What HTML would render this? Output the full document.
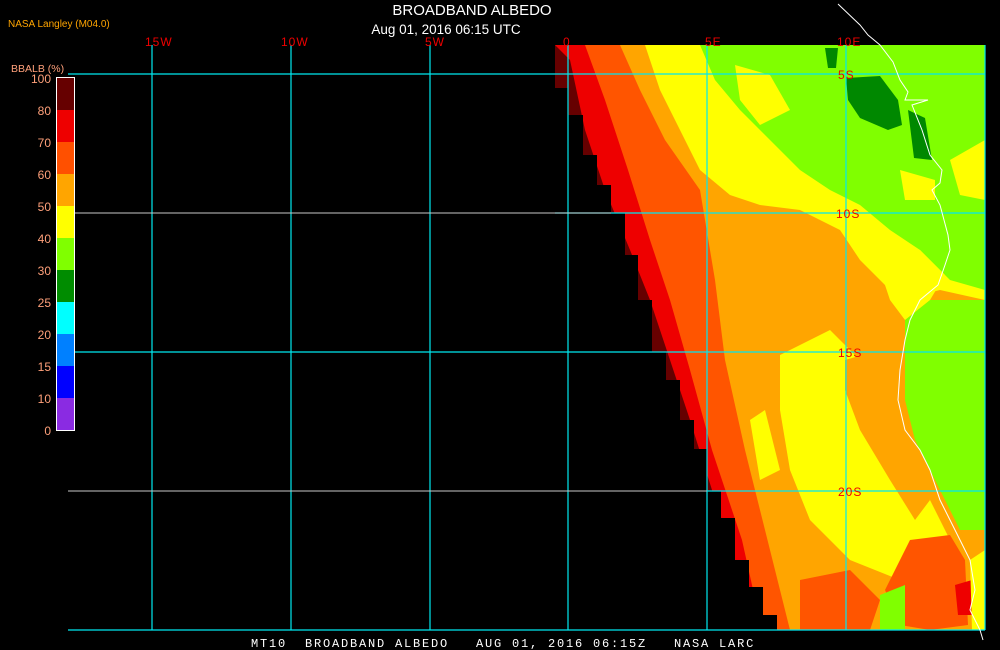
<!DOCTYPE html>
<html><head><meta charset="utf-8"><style>
html,body{margin:0;padding:0;background:#000;width:1000px;height:650px;overflow:hidden}
svg{display:block}
text{font-family:"Liberation Sans",sans-serif}
.m{font-family:"Liberation Mono",monospace}
</style></head><body>
<svg width="1000" height="650" viewBox="0 0 1000 650">
<defs>
<clipPath id="d"><polygon points="555,45 555,88 568,88 568,115 583,115 583,155 597,155 597,185 611,185 611,213 625,213 625,255 638,255 638,300 652,300 652,352 666,352 666,380 680,380 680,420 694,420 694,449 707,449 707,491 721,491 721,518 735,518 735,560 749,560 749,587 763,587 763,615 777,615 777,630 985,630 985,45"/></clipPath>
</defs>
<g clip-path="url(#d)">
<rect x="540" y="40" width="450" height="600" fill="#ffa500"/>
<!-- top yellow -->
<polygon points="645,45 985,45 985,300 940,290 900,300 860,260 840,230 800,210 760,205 730,195 700,170 680,130 660,90" fill="#ffff00"/>
<!-- top light green -->
<polygon points="700,45 985,45 985,290 950,280 920,250 890,230 860,205 830,190 800,170 770,140 740,110 715,80" fill="#80ff00"/>
<polygon points="735,65 770,75 790,110 760,125 740,100" fill="#ffff00"/>
<polygon points="900,170 935,180 935,200 905,200" fill="#ffff00"/>
<polygon points="950,160 985,140 985,200 960,195" fill="#ffff00"/>
<!-- dark green -->
<polygon points="846,78 880,76 898,100 902,125 888,130 860,118 848,100" fill="#008800"/>
<polygon points="825,48 838,48 836,68 828,68" fill="#008800"/>
<polygon points="908,110 925,118 932,160 914,158" fill="#008800"/>
<!-- yellow lower middle -->
<polygon points="780,355 830,330 870,370 900,430 930,500 960,560 945,590 900,580 850,560 810,520 790,470 780,410" fill="#ffff00"/>
<polygon points="845,360 880,350 905,390 910,440 930,500 915,520 890,480 860,430 845,390" fill="#ffa500"/>
<polygon points="905,320 930,300 985,300 985,530 960,530 935,480 915,440 905,400" fill="#80ff00"/>
<polygon points="890,240 920,250 945,275 930,300 905,320 890,300 880,270" fill="#ffff00"/>
<!-- bottom right -->
<polygon points="910,540 950,535 965,560 968,625 930,630 900,625 885,590" fill="#ff5500"/>
<polygon points="800,580 850,570 880,600 870,630 800,630" fill="#ff5500"/>
<polygon points="880,595 905,585 905,630 880,630" fill="#80ff00"/>
<polygon points="955,585 972,580 975,615 958,615" fill="#ee0000"/>
<polygon points="970,560 985,550 985,630 972,630" fill="#ffff00"/>
<!-- left stripes -->
<polygon points="555,45 620,45 640,90 665,140 700,190 715,280 725,360 745,450 765,530 790,630 700,630 660,400 620,300 580,200 555,120" fill="#ff5500"/>
<polygon points="555,45 585,45 605,100 628,170 650,240 670,300 690,370 712,450 742,540 762,630 740,630 700,520 660,400 620,300 580,200 555,120" fill="#ee0000"/>
<polygon points="555,45 570,60 585,130 605,190 630,250 650,300 670,360 690,420 712,490 735,560 755,630 740,630 700,520 660,400 620,300 580,200 555,100" fill="#660000"/>
<polygon points="750,420 765,410 780,470 760,480" fill="#ffff00"/>
</g>
<!-- grid -->
<g stroke="#00e8f0" stroke-width="1.2" fill="none">
<line x1="68" y1="74" x2="985" y2="74"/>
<line x1="555" y1="213" x2="985" y2="213"/>
<line x1="68" y1="352" x2="985" y2="352"/>
<line x1="707" y1="491" x2="985" y2="491"/>
<line x1="68" y1="630" x2="985" y2="630"/>
<line x1="152" y1="45" x2="152" y2="630"/>
<line x1="291" y1="45" x2="291" y2="630"/>
<line x1="430" y1="45" x2="430" y2="630"/>
<line x1="568" y1="45" x2="568" y2="630"/>
<line x1="707" y1="45" x2="707" y2="630"/>
<line x1="846" y1="45" x2="846" y2="630"/>
<line x1="985" y1="45" x2="985" y2="630"/>
</g>
<g stroke="#c8c8c8" stroke-width="1">
<line x1="68" y1="213" x2="611" y2="213"/>
<line x1="68" y1="491" x2="707" y2="491"/>
</g>
<polyline fill="none" stroke="#fff" stroke-width="1" points="838,4 860,25 868,35 880,45 893,62 900,80 908,92 905,100 928,100 912,105 922,130 930,155 942,170 940,183 932,190 940,205 948,235 950,250 945,265 938,285 920,300 910,320 905,340 900,370 898,400 905,430 920,450 930,470 940,500 950,520 960,540 970,560 975,590 970,610 980,630 983,640"/>
<g fill="#ee0000" font-size="12" class="m" letter-spacing="1">
<text x="838" y="79">5S</text>
<text x="836" y="218">10S</text>
<text x="838" y="357">15S</text>
<text x="838" y="496">20S</text>
<text x="145" y="46">15W</text>
<text x="281" y="46">10W</text>
<text x="425" y="46">5W</text>
<text x="563" y="46">0</text>
<text x="705" y="46">5E</text>
<text x="837" y="46">10E</text>
</g>
<text x="472" y="15" fill="#fff" font-size="15" text-anchor="middle">BROADBAND ALBEDO</text>
<text x="446" y="34" fill="#fff" font-size="13.5" text-anchor="middle">Aug 01, 2016 06:15 UTC</text>
<text x="8" y="27" fill="#ffa500" font-size="10">NASA Langley (M04.0)</text>
<text x="11" y="72" fill="#ffa07a" font-size="10.5">BBALB (%)</text>
<g>
<rect x="57" y="78" width="17" height="32" fill="#660000"/>
<rect x="57" y="110" width="17" height="32" fill="#ee0000"/>
<rect x="57" y="142" width="17" height="32" fill="#ff5000"/>
<rect x="57" y="174" width="17" height="32" fill="#ffa500"/>
<rect x="57" y="206" width="17" height="32" fill="#ffff00"/>
<rect x="57" y="238" width="17" height="32" fill="#80ff00"/>
<rect x="57" y="270" width="17" height="32" fill="#008c00"/>
<rect x="57" y="302" width="17" height="32" fill="#00ffff"/>
<rect x="57" y="334" width="17" height="32" fill="#0080ff"/>
<rect x="57" y="366" width="17" height="32" fill="#0000ff"/>
<rect x="57" y="398" width="17" height="32" fill="#8a2be2"/>
<rect x="56.5" y="77.5" width="18" height="353" fill="none" stroke="#fff" stroke-width="1"/>
</g>
<g fill="#ffa07a" font-size="12" text-anchor="end" class="m">
<text x="51" y="83">100</text>
<text x="51" y="115">80</text>
<text x="51" y="147">70</text>
<text x="51" y="179">60</text>
<text x="51" y="211">50</text>
<text x="51" y="243">40</text>
<text x="51" y="275">30</text>
<text x="51" y="307">25</text>
<text x="51" y="339">20</text>
<text x="51" y="371">15</text>
<text x="51" y="403">10</text>
<text x="51" y="435">0</text>
</g>
<text x="251" y="647" fill="#fff" font-size="12" class="m" letter-spacing="1.8" xml:space="preserve">MT10  BROADBAND ALBEDO   AUG 01, 2016 06:15Z   NASA LARC</text>
</svg>
</body></html>
